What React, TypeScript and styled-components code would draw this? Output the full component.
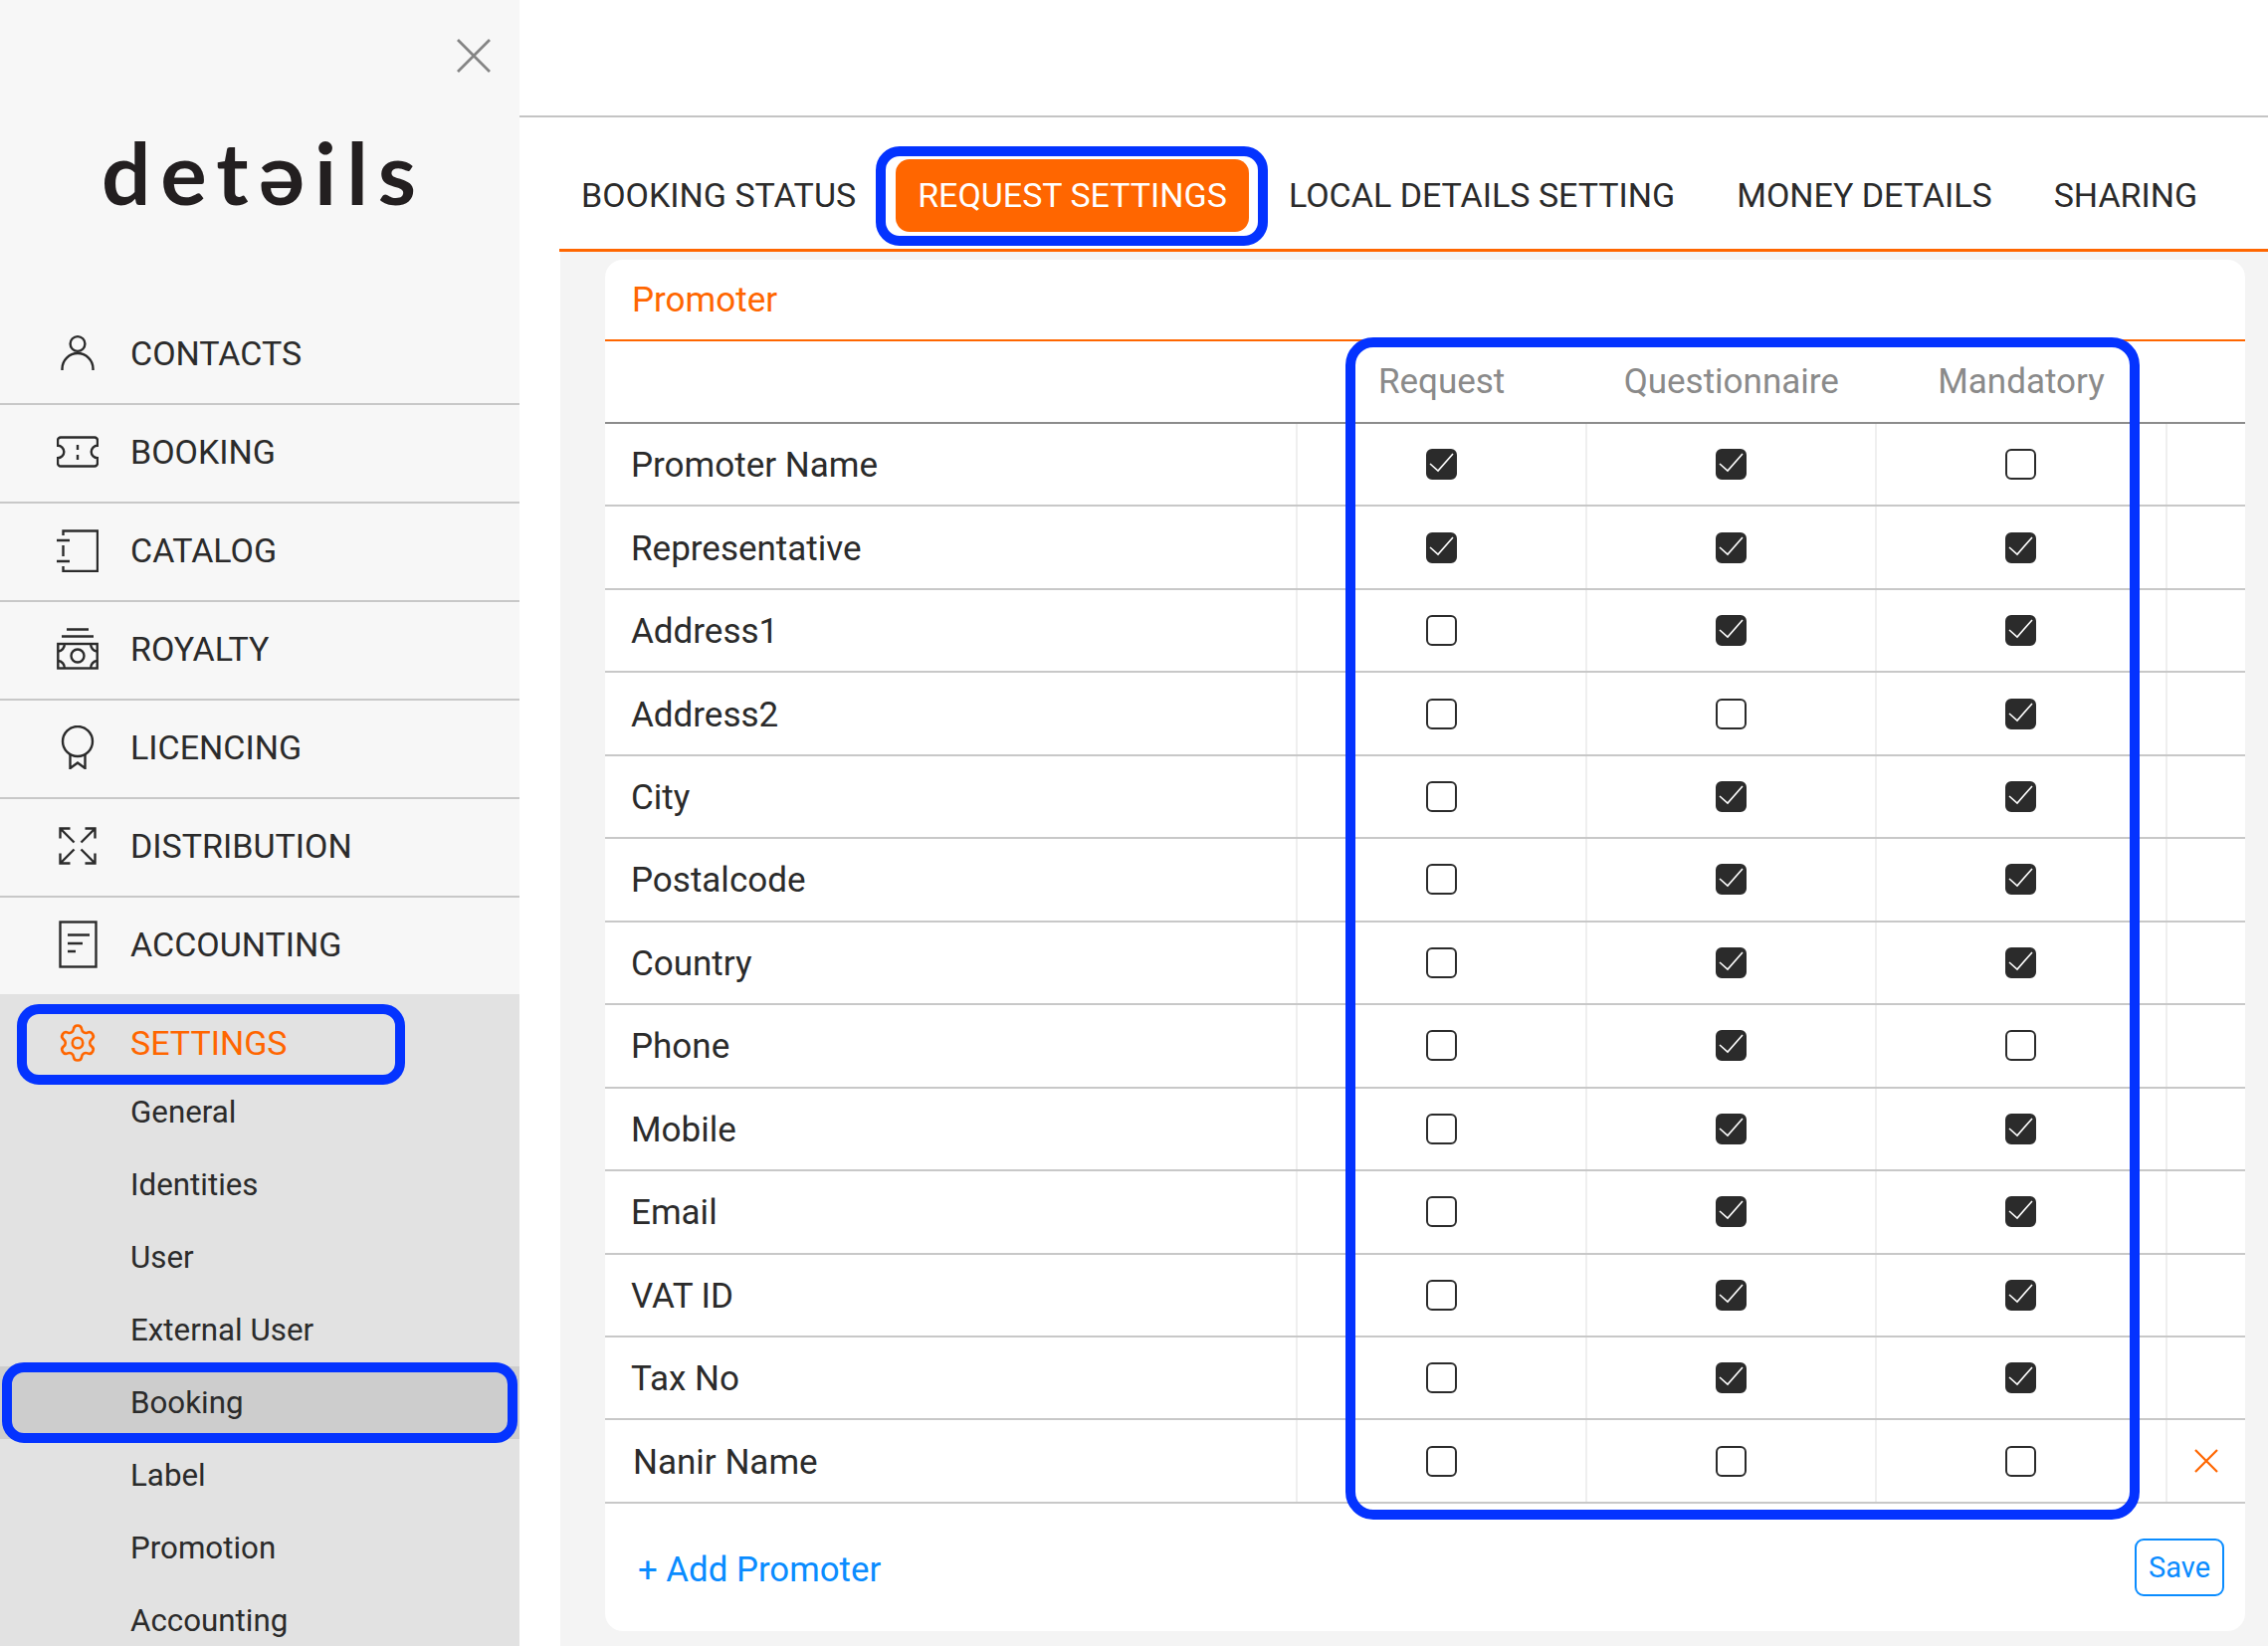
import React from "react";
import styled, { createGlobalStyle } from "styled-components";
import { Settings } from "lucide-react";

const ORANGE = "#ff6600";
const INK = "#2b2b2b";
const BLUE = "#0433ff";
const LINK = "#0a8cff";

const GlobalStyle = createGlobalStyle`
  html, body {
    margin: 0;
    padding: 0;
    background: #fff;
  }
  body {
    font-family: Roboto, "Liberation Sans", sans-serif;
    color: ${INK};
    overflow: hidden;
  }
  * {
    box-sizing: border-box;
  }
`;

const Page = styled.div`
  display: flex;
  width: 2279px;
  height: 1654px;
  overflow: hidden;
`;

/* ---------- sidebar ---------- */

const Sidebar = styled.aside`
  width: 522px;
  flex: none;
  display: flex;
  flex-direction: column;
  background: #f7f7f7;
`;

const Brand = styled.div`
  height: 308px;
  padding-top: 39px;
  display: flex;
  flex-direction: column;
`;

const CloseIcon = styled.svg`
  width: 34px;
  height: 34px;
  align-self: flex-end;
  margin-right: 29px;
`;

const Logo = styled.div`
  margin-top: 57px;
  padding-left: 8px;
  text-align: center;
  font-family: Lato, "Open Sans", sans-serif;
  font-weight: 700;
  font-size: 87px;
  line-height: 86px;
  letter-spacing: 10px;
  color: #231f20;
`;

const NavRow = styled.div<{ $active?: boolean; $last?: boolean }>`
  position: relative;
  height: ${(p) => (p.$active ? "99px" : p.$last ? "97px" : "99px")};
  display: flex;
  align-items: center;
  padding-bottom: ${(p) => (p.$active ? "2px" : "4px")};
  padding-left: 57px;
  font-size: 34px;
  color: ${(p) => (p.$active ? ORANGE : INK)};
  border-bottom: ${(p) => (p.$active || p.$last ? "none" : "2px solid #c8c8c8")};
`;

const NavIcon = styled.span`
  width: 42px;
  height: 44px;
  margin-right: 32px;
  display: flex;
  align-items: center;
  justify-content: center;
  flex: none;
`;

const SettingsBlock = styled.div`
  background: #e2e2e2;
  flex: 1;
  min-height: 0;
`;

const SubList = styled.div`
  margin-top: -17px;
`;

const SubItem = styled.div<{ $active?: boolean }>`
  position: relative;
  height: 73px;
  display: flex;
  align-items: center;
  padding-left: 131px;
  font-size: 31.3px;
  color: ${INK};
  background: ${(p) => (p.$active ? "#cdcdcd" : "transparent")};
`;

/* the blue annotation frames drawn over the screenshot */
const Frame = styled.div`
  position: absolute;
  border: 10px solid ${BLUE};
  pointer-events: none;
  z-index: 5;
`;

const SettingsFrame = styled(Frame)`
  left: 17px;
  top: 10px;
  width: 390px;
  height: 81px;
  border-radius: 22px;
`;

const BookingFrame = styled(Frame)`
  left: 2px;
  top: -4px;
  width: 518px;
  height: 81px;
  border-radius: 22px;
`;

const TabFrame = styled(Frame)`
  left: -20px;
  top: -13px;
  width: 394px;
  height: 100px;
  border-radius: 24px;
`;

const TableFrame = styled(Frame)`
  left: 744px;
  top: -4px;
  width: 798px;
  height: 1188px;
  border-radius: 28px;
`;

/* ---------- main ---------- */

const Main = styled.main`
  flex: 1;
  min-width: 0;
  display: flex;
  flex-direction: column;
`;

const TopBar = styled.div`
  height: 118px;
  flex: none;
  border-bottom: 2px solid #c4c4c4;
`;

const Tabs = styled.nav`
  margin-left: 40px;
  height: 135px;
  flex: none;
  display: flex;
  gap: 18px;
  padding-top: 42px;
  border-bottom: 3px solid ${ORANGE};
`;

const Tab = styled.div<{ $active?: boolean }>`
  position: relative;
  height: 73px;
  padding: 0 22px 2px;
  display: flex;
  align-items: center;
  font-size: 34px;
  white-space: nowrap;
  border-radius: 14px;
  color: ${(p) => (p.$active ? "#fff" : INK)};
  background: ${(p) => (p.$active ? ORANGE : "transparent")};
`;

const Content = styled.div`
  flex: 1;
  margin-left: 41px;
  padding: 8px 23px 15px 45px;
  background: #f4f4f4;
  min-height: 0;
`;

const Card = styled.section`
  height: 100%;
  background: #fff;
  border-radius: 18px;
  display: flex;
  flex-direction: column;
`;

const CardTitle = styled.h2`
  margin: 0;
  height: 82px;
  flex: none;
  padding: 0 0 0 27px;
  display: flex;
  align-items: center;
  font-size: 35px;
  font-weight: 400;
  color: ${ORANGE};
  border-bottom: 2px solid ${ORANGE};
`;

const Table = styled.div`
  position: relative;
  flex: none;
`;

const COLUMNS = "694px repeat(3, 291.2px) 1fr";

const HeadRow = styled.div`
  height: 83px;
  display: grid;
  grid-template-columns: ${COLUMNS};
  align-items: center;
  border-bottom: 2px solid #8c8c8c;
`;

const HeadCell = styled.div`
  padding-left: 2px;
  text-align: center;
  font-size: 35px;
  color: #8a8a8a;
`;

const Row = styled.div`
  height: 83.46px;
  display: grid;
  grid-template-columns: ${COLUMNS};
  border-bottom: 2px solid #c8c8c8;
`;

const NameCell = styled.div<{ $custom?: boolean }>`
  display: flex;
  align-items: center;
  padding-top: 2px;
  padding-left: ${(p) => (p.$custom ? "28px" : "26px")};
  font-size: 35px;
`;

const Cell = styled.div`
  display: flex;
  align-items: center;
  justify-content: center;
  border-left: 2px solid #efefef;
`;

const CheckBox = styled.span<{ $checked: boolean }>`
  width: 31px;
  height: 31px;
  border-radius: 6px;
  border: 2px solid ${INK};
  background: ${(p) => (p.$checked ? INK : "#fff")};
  display: block;
  position: relative;
`;

const CheckMark = styled.svg`
  position: absolute;
  left: -2px;
  top: -2px;
  width: 31px;
  height: 31px;
`;

const Footer = styled.div`
  flex: 1;
  display: flex;
  align-items: center;
  justify-content: space-between;
  padding: 0 21px 0 33px;
`;

const AddLink = styled.span`
  margin-top: 4px;
  font-size: 34.8px;
  color: ${LINK};
`;

const SaveButton = styled.button`
  width: 90px;
  height: 58px;
  padding: 0;
  font-family: inherit;
  font-size: 29px;
  color: ${LINK};
  background: #fff;
  border: 2px solid ${LINK};
  border-radius: 9px;
`;

/* ---------- icons ---------- */

const Line = { fill: "none", stroke: INK, strokeWidth: 2.4 };

const PersonIcon = () => (
  <svg width="42" height="44" viewBox="0 0 42 44" {...Line}>
    <circle cx="21" cy="12.500" r="7.400" />
    <path d="M5.500 39v-1.500a15.500 15.500 0 0 1 31 0V39" />
  </svg>
);

const TicketIcon = () => (
  <svg width="42" height="44" viewBox="0 0 42 44" {...Line}>
    <path d="M4 7.500h34a3 3 0 0 1 3 3v5.200a6.300 6.300 0 0 0 0 12.600v5.200a3 3 0 0 1-3 3H4a3 3 0 0 1-3-3v-5.200a6.300 6.300 0 0 0 0-12.600v-5.200a3 3 0 0 1 3-3z" />
    <path d="M21 15v5M21 25v5" />
  </svg>
);

const CatalogIcon = () => (
  <svg width="42" height="44" viewBox="0 0 42 44" {...Line}>
    <path d="M6.500 7V2.500H41v40.500H6.500v-5" />
    <path d="M0 12h13M0 33h13M6.500 17v11" />
  </svg>
);

const NoteIcon = () => (
  <svg width="42" height="44" viewBox="0 0 42 44" {...Line}>
    <path d="M10 2.500h22M5 9.500h32" />
    <rect x="1.300" y="17" width="39.400" height="24.500" />
    <circle cx="21" cy="29" r="6.500" />
    <path d="M1.300 24.500a7 7 0 0 0 6.500-7.500M40.700 24.500a7 7 0 0 1-6.500-7.500M1.300 34a7 7 0 0 1 6.500 7.500M40.700 34a7 7 0 0 0-6.500 7.500" />
  </svg>
);

const RibbonIcon = () => (
  <svg width="42" height="44" viewBox="0 0 42 44" {...Line}>
    <circle cx="21" cy="16" r="15" />
    <path d="M13.500 29v14l7.500-5.500 7.500 5.500V29" />
  </svg>
);

const ExpandIcon = () => (
  <svg width="42" height="44" viewBox="0 0 42 44" {...Line}>
    <path d="M3.500 14.500V4.500h10M3.500 4.500l14 14M38.500 14.500V4.500h-10M38.500 4.500l-14 14M3.500 29.500v10h10M3.500 39.500l14-14M38.500 29.500v10h-10M38.500 39.500l-14-14" />
  </svg>
);

const DocumentIcon = () => (
  <svg width="42" height="48" viewBox="0 0 42 48" {...Line}>
    <rect x="3.500" y="1.500" width="36" height="45" />
    <path d="M11 14.500h22M11 23h15M11 31h8" />
  </svg>
);

const GearIcon = styled(Settings)`
  width: 42px;
  height: 42px;
  color: ${ORANGE};
  stroke-width: 1.5;
`;

/* ---------- data ---------- */

const navItems = [
  { label: "CONTACTS", icon: <PersonIcon /> },
  { label: "BOOKING", icon: <TicketIcon /> },
  { label: "CATALOG", icon: <CatalogIcon /> },
  { label: "ROYALTY", icon: <NoteIcon /> },
  { label: "LICENCING", icon: <RibbonIcon /> },
  { label: "DISTRIBUTION", icon: <ExpandIcon /> },
  { label: "ACCOUNTING", icon: <DocumentIcon /> },
];

const subItems = ["General", "Identities", "User", "External User", "Booking", "Label", "Promotion", "Accounting"];

const tabs = ["BOOKING STATUS", "REQUEST SETTINGS", "LOCAL DETAILS SETTING", "MONEY DETAILS", "SHARING"];

const rows: [string, boolean, boolean, boolean][] = [
  ["Promoter Name", true, true, false],
  ["Representative", true, true, true],
  ["Address1", false, true, true],
  ["Address2", false, false, true],
  ["City", false, true, true],
  ["Postalcode", false, true, true],
  ["Country", false, true, true],
  ["Phone", false, true, false],
  ["Mobile", false, true, true],
  ["Email", false, true, true],
  ["VAT ID", false, true, true],
  ["Tax No", false, true, true],
  ["Nanir Name", false, false, false],
];

function Check({ checked }: { checked: boolean }) {
  return (
    <CheckBox $checked={checked}>
      {checked && (
        <CheckMark viewBox="0 0 31 31" fill="none" stroke="#fff" strokeWidth="1.6">
          <path d="M4 15l8 7L27 5" />
        </CheckMark>
      )}
    </CheckBox>
  );
}

export default function App() {
  return (
    <Page>
      <GlobalStyle />
      <Sidebar>
        <Brand>
          <CloseIcon viewBox="0 0 34 34" fill="none" stroke="#858585" strokeWidth="2.800">
            <path d="M1 1l32 32M33 1L1 33" />
          </CloseIcon>
          <Logo>detəils</Logo>
        </Brand>
        {navItems.map((item, i) => (
          <NavRow key={item.label} $last={i === navItems.length - 1}>
            <NavIcon>{item.icon}</NavIcon>
            {item.label}
          </NavRow>
        ))}
        <SettingsBlock>
          <NavRow $active>
            <SettingsFrame />
            <NavIcon>
              <GearIcon />
            </NavIcon>
            SETTINGS
          </NavRow>
          <SubList>
            {subItems.map((name) => (
              <SubItem key={name} $active={name === "Booking"}>
                {name === "Booking" && <BookingFrame />}
                {name}
              </SubItem>
            ))}
          </SubList>
        </SettingsBlock>
      </Sidebar>
      <Main>
        <TopBar />
        <Tabs>
          {tabs.map((tab) => (
            <Tab key={tab} $active={tab === "REQUEST SETTINGS"}>
              {tab === "REQUEST SETTINGS" && <TabFrame />}
              {tab}
            </Tab>
          ))}
        </Tabs>
        <Content>
          <Card>
            <CardTitle>Promoter</CardTitle>
            <Table>
              <TableFrame />
              <HeadRow>
                <span />
                <HeadCell>Request</HeadCell>
                <HeadCell>Questionnaire</HeadCell>
                <HeadCell>Mandatory</HeadCell>
              </HeadRow>
              {rows.map(([name, a, b, c]) => {
                const custom = name === "Nanir Name";
                return (
                  <Row key={name}>
                    <NameCell $custom={custom}>{name}</NameCell>
                    <Cell><Check checked={a} /></Cell>
                    <Cell><Check checked={b} /></Cell>
                    <Cell><Check checked={c} /></Cell>
                    <Cell>
                      {custom && (
                        <svg width="26" height="26" viewBox="0 0 26 26" fill="none" stroke={ORANGE} strokeWidth="2.200">
                          <path d="M2 2l22 22M24 2L2 24" />
                        </svg>
                      )}
                    </Cell>
                  </Row>
                );
              })}
            </Table>
            <Footer>
              <AddLink>+ Add Promoter</AddLink>
              <SaveButton>Save</SaveButton>
            </Footer>
          </Card>
        </Content>
      </Main>
    </Page>
  );
}
